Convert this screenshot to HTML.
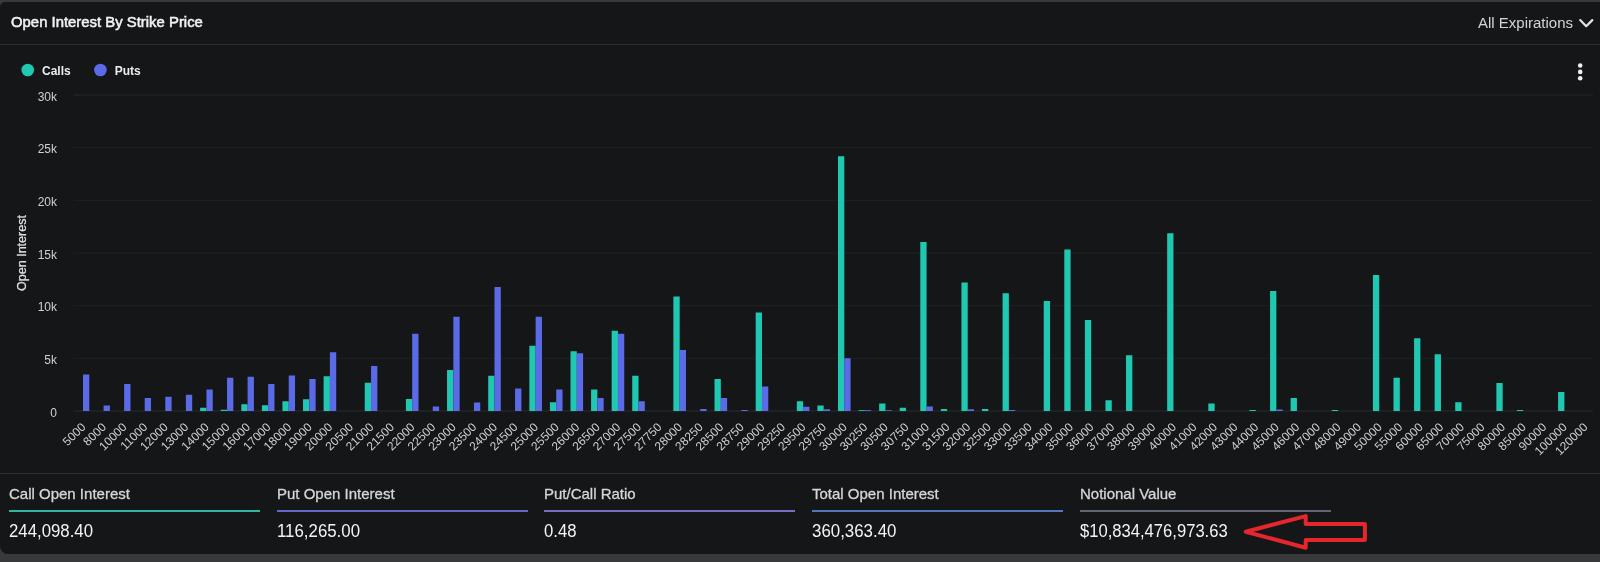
<!DOCTYPE html>
<html><head><meta charset="utf-8"><title>Open Interest By Strike Price</title>
<style>
html,body{margin:0;padding:0;}
body{width:1600px;height:562px;overflow:hidden;background:#38393b;font-family:"Liberation Sans",sans-serif;position:relative;}
#panel{position:absolute;left:0;top:2px;width:1610px;height:551.5px;background:#151618;border-radius:5px 0 0 8px;}
.abs{position:absolute;white-space:nowrap;will-change:transform;}
.sx{display:inline-block;transform-origin:0 50%;}
#title{left:11px;top:13px;font-size:15.5px;color:#f2f2f2;line-height:18px;-webkit-text-stroke:0.55px #f2f2f2;}
#exp{left:1478px;top:13.8px;font-size:15.2px;color:#d4d4d4;line-height:18px;}
.hline{position:absolute;left:0;width:1600px;height:1.5px;background:#2c2d30;}
svg{position:absolute;left:0;top:0;will-change:transform;}
.yl{font-size:12px;fill:#d0d0d0;font-family:"Liberation Sans",sans-serif;}
.xl{font-size:12px;fill:#cfcfcf;font-family:"Liberation Sans",sans-serif;}
.yt{font-size:12.5px;fill:#e0e0e0;stroke:#e0e0e0;stroke-width:0.25px;font-family:"Liberation Sans",sans-serif;}
.lg{font-size:12px;font-weight:bold;fill:#ececec;font-family:"Liberation Sans",sans-serif;}
.stat{position:absolute;top:474px;width:250.5px;height:80px;}
.stat .lab{position:absolute;left:0;top:485px;font-size:15px;color:#d6d6d6;line-height:18px;white-space:nowrap;}
.stat .ul{position:absolute;left:0;width:250.5px;height:2px;}
.stat .val{position:absolute;left:0;font-size:17px;color:#f4f4f4;line-height:20px;white-space:nowrap;}
</style></head><body>
<div id="panel"></div>
<div class="hline" style="top:43.8px"></div>
<div class="hline" style="top:472.5px"></div>
<div id="title" class="abs"><span class="sx" id="t_title" style="transform:scaleX(0.960)">Open Interest By Strike Price</span></div>
<div id="exp" class="abs"><span class="sx" id="t_exp" style="transform:scaleX(0.987)">All Expirations</span></div>
<svg width="1600" height="562" viewBox="0 0 1600 562">
<polyline points="1580.2,20.1 1586.2,26.2 1592.3,20.1" fill="none" stroke="#e4e4e4" stroke-width="2.2" stroke-linecap="round" stroke-linejoin="round"/>
<circle cx="1580.2" cy="65.5" r="2.3" fill="#f0f0f0"/><circle cx="1580.2" cy="71.9" r="2.3" fill="#f0f0f0"/><circle cx="1580.2" cy="78.3" r="2.3" fill="#f0f0f0"/>
<circle cx="27.75" cy="70" r="6.3" fill="#20c8b1"/><text x="42" y="74.5" class="lg">Calls</text>
<circle cx="100.4" cy="70" r="6.3" fill="#5b6be8"/><text x="114.7" y="74.5" class="lg">Puts</text>
<line x1="73.5" x2="1593" y1="95.00" y2="95.00" stroke="#252629" stroke-width="1"/>
<line x1="73.5" x2="1593" y1="147.67" y2="147.67" stroke="#202124" stroke-width="1"/>
<line x1="73.5" x2="1593" y1="200.33" y2="200.33" stroke="#202124" stroke-width="1"/>
<line x1="73.5" x2="1593" y1="253.00" y2="253.00" stroke="#202124" stroke-width="1"/>
<line x1="73.5" x2="1593" y1="305.67" y2="305.67" stroke="#202124" stroke-width="1"/>
<line x1="73.5" x2="1593" y1="358.33" y2="358.33" stroke="#202124" stroke-width="1"/>
<line x1="73.5" x2="1593" y1="411.00" y2="411.00" stroke="#2a2b2e" stroke-width="1"/>
<rect x="83.00" y="374.50" width="6.3" height="36.50" fill="#5b6be8"/>
<rect x="103.58" y="405.50" width="6.3" height="5.50" fill="#5b6be8"/>
<rect x="124.15" y="384.00" width="6.3" height="27.00" fill="#5b6be8"/>
<rect x="144.72" y="398.00" width="6.3" height="13.00" fill="#5b6be8"/>
<rect x="165.30" y="396.75" width="6.3" height="14.25" fill="#5b6be8"/>
<rect x="185.88" y="394.75" width="6.3" height="16.25" fill="#5b6be8"/>
<rect x="200.15" y="407.75" width="6.3" height="3.25" fill="#20c8b1"/>
<rect x="206.45" y="389.50" width="6.3" height="21.50" fill="#5b6be8"/>
<rect x="220.72" y="409.75" width="6.3" height="1.25" fill="#20c8b1"/>
<rect x="227.03" y="377.75" width="6.3" height="33.25" fill="#5b6be8"/>
<rect x="241.30" y="404.25" width="6.3" height="6.75" fill="#20c8b1"/>
<rect x="247.60" y="376.75" width="6.3" height="34.25" fill="#5b6be8"/>
<rect x="261.87" y="405.25" width="6.3" height="5.75" fill="#20c8b1"/>
<rect x="268.17" y="384.00" width="6.3" height="27.00" fill="#5b6be8"/>
<rect x="282.45" y="401.25" width="6.3" height="9.75" fill="#20c8b1"/>
<rect x="288.75" y="375.50" width="6.3" height="35.50" fill="#5b6be8"/>
<rect x="303.02" y="399.25" width="6.3" height="11.75" fill="#20c8b1"/>
<rect x="309.32" y="379.00" width="6.3" height="32.00" fill="#5b6be8"/>
<rect x="323.60" y="376.25" width="6.3" height="34.75" fill="#20c8b1"/>
<rect x="329.90" y="352.25" width="6.3" height="58.75" fill="#5b6be8"/>
<rect x="364.75" y="382.75" width="6.3" height="28.25" fill="#20c8b1"/>
<rect x="371.05" y="366.00" width="6.3" height="45.00" fill="#5b6be8"/>
<rect x="405.90" y="399.00" width="6.3" height="12.00" fill="#20c8b1"/>
<rect x="412.20" y="333.75" width="6.3" height="77.25" fill="#5b6be8"/>
<rect x="432.77" y="406.50" width="6.3" height="4.50" fill="#5b6be8"/>
<rect x="447.05" y="370.00" width="6.3" height="41.00" fill="#20c8b1"/>
<rect x="453.35" y="316.75" width="6.3" height="94.25" fill="#5b6be8"/>
<rect x="473.93" y="402.50" width="6.3" height="8.50" fill="#5b6be8"/>
<rect x="488.20" y="375.75" width="6.3" height="35.25" fill="#20c8b1"/>
<rect x="494.50" y="287.00" width="6.3" height="124.00" fill="#5b6be8"/>
<rect x="515.08" y="388.50" width="6.3" height="22.50" fill="#5b6be8"/>
<rect x="529.35" y="345.75" width="6.3" height="65.25" fill="#20c8b1"/>
<rect x="535.65" y="316.75" width="6.3" height="94.25" fill="#5b6be8"/>
<rect x="549.92" y="402.25" width="6.3" height="8.75" fill="#20c8b1"/>
<rect x="556.22" y="389.50" width="6.3" height="21.50" fill="#5b6be8"/>
<rect x="570.50" y="351.25" width="6.3" height="59.75" fill="#20c8b1"/>
<rect x="576.80" y="353.25" width="6.3" height="57.75" fill="#5b6be8"/>
<rect x="591.08" y="389.50" width="6.3" height="21.50" fill="#20c8b1"/>
<rect x="597.38" y="398.00" width="6.3" height="13.00" fill="#5b6be8"/>
<rect x="611.65" y="330.75" width="6.3" height="80.25" fill="#20c8b1"/>
<rect x="617.95" y="333.75" width="6.3" height="77.25" fill="#5b6be8"/>
<rect x="632.23" y="375.75" width="6.3" height="35.25" fill="#20c8b1"/>
<rect x="638.52" y="401.25" width="6.3" height="9.75" fill="#5b6be8"/>
<rect x="673.38" y="296.50" width="6.3" height="114.50" fill="#20c8b1"/>
<rect x="679.67" y="350.00" width="6.3" height="61.00" fill="#5b6be8"/>
<rect x="700.25" y="409.00" width="6.3" height="2.00" fill="#5b6be8"/>
<rect x="714.52" y="379.00" width="6.3" height="32.00" fill="#20c8b1"/>
<rect x="720.82" y="398.00" width="6.3" height="13.00" fill="#5b6be8"/>
<rect x="741.40" y="410.00" width="6.3" height="1.00" fill="#5b6be8"/>
<rect x="755.68" y="312.50" width="6.3" height="98.50" fill="#20c8b1"/>
<rect x="761.98" y="386.50" width="6.3" height="24.50" fill="#5b6be8"/>
<rect x="796.83" y="401.25" width="6.3" height="9.75" fill="#20c8b1"/>
<rect x="803.12" y="406.75" width="6.3" height="4.25" fill="#5b6be8"/>
<rect x="817.40" y="405.50" width="6.3" height="5.50" fill="#20c8b1"/>
<rect x="823.70" y="409.25" width="6.3" height="1.75" fill="#5b6be8"/>
<rect x="837.98" y="156.25" width="6.3" height="254.75" fill="#20c8b1"/>
<rect x="844.27" y="358.25" width="6.3" height="52.75" fill="#5b6be8"/>
<rect x="858.55" y="410.15" width="6.3" height="0.85" fill="#20c8b1"/>
<rect x="864.85" y="410.15" width="6.3" height="0.85" fill="#5b6be8"/>
<rect x="879.12" y="403.50" width="6.3" height="7.50" fill="#20c8b1"/>
<rect x="885.42" y="410.25" width="6.3" height="0.75" fill="#5b6be8"/>
<rect x="899.70" y="407.75" width="6.3" height="3.25" fill="#20c8b1"/>
<rect x="920.27" y="242.00" width="6.3" height="169.00" fill="#20c8b1"/>
<rect x="926.57" y="406.50" width="6.3" height="4.50" fill="#5b6be8"/>
<rect x="940.85" y="409.00" width="6.3" height="2.00" fill="#20c8b1"/>
<rect x="961.43" y="282.50" width="6.3" height="128.50" fill="#20c8b1"/>
<rect x="967.73" y="409.25" width="6.3" height="1.75" fill="#5b6be8"/>
<rect x="982.00" y="409.00" width="6.3" height="2.00" fill="#20c8b1"/>
<rect x="1002.58" y="293.25" width="6.3" height="117.75" fill="#20c8b1"/>
<rect x="1008.88" y="410.00" width="6.3" height="1.00" fill="#5b6be8"/>
<rect x="1043.73" y="301.00" width="6.3" height="110.00" fill="#20c8b1"/>
<rect x="1064.30" y="249.50" width="6.3" height="161.50" fill="#20c8b1"/>
<rect x="1084.88" y="320.00" width="6.3" height="91.00" fill="#20c8b1"/>
<rect x="1105.45" y="400.25" width="6.3" height="10.75" fill="#20c8b1"/>
<rect x="1126.03" y="355.25" width="6.3" height="55.75" fill="#20c8b1"/>
<rect x="1167.17" y="233.25" width="6.3" height="177.75" fill="#20c8b1"/>
<rect x="1208.33" y="403.50" width="6.3" height="7.50" fill="#20c8b1"/>
<rect x="1249.47" y="410.00" width="6.3" height="1.00" fill="#20c8b1"/>
<rect x="1270.05" y="291.00" width="6.3" height="120.00" fill="#20c8b1"/>
<rect x="1276.35" y="409.50" width="6.3" height="1.50" fill="#5b6be8"/>
<rect x="1290.62" y="398.00" width="6.3" height="13.00" fill="#20c8b1"/>
<rect x="1331.78" y="410.00" width="6.3" height="1.00" fill="#20c8b1"/>
<rect x="1372.92" y="275.00" width="6.3" height="136.00" fill="#20c8b1"/>
<rect x="1393.50" y="377.75" width="6.3" height="33.25" fill="#20c8b1"/>
<rect x="1414.08" y="338.25" width="6.3" height="72.75" fill="#20c8b1"/>
<rect x="1434.65" y="354.25" width="6.3" height="56.75" fill="#20c8b1"/>
<rect x="1455.22" y="402.25" width="6.3" height="8.75" fill="#20c8b1"/>
<rect x="1496.38" y="383.00" width="6.3" height="28.00" fill="#20c8b1"/>
<rect x="1516.95" y="410.00" width="6.3" height="1.00" fill="#20c8b1"/>
<rect x="1558.10" y="392.00" width="6.3" height="19.00" fill="#20c8b1"/>
<text x="57" y="100.60" text-anchor="end" class="yl">30k</text>
<text x="57" y="153.27" text-anchor="end" class="yl">25k</text>
<text x="57" y="205.93" text-anchor="end" class="yl">20k</text>
<text x="57" y="258.60" text-anchor="end" class="yl">15k</text>
<text x="57" y="311.27" text-anchor="end" class="yl">10k</text>
<text x="57" y="363.93" text-anchor="end" class="yl">5k</text>
<text x="57" y="416.60" text-anchor="end" class="yl">0</text>
<text x="86.40" y="427.7" text-anchor="end" class="xl" transform="rotate(-45 86.40 427.7)">5000</text>
<text x="106.98" y="427.7" text-anchor="end" class="xl" transform="rotate(-45 106.98 427.7)">8000</text>
<text x="127.55" y="427.7" text-anchor="end" class="xl" transform="rotate(-45 127.55 427.7)">10000</text>
<text x="148.12" y="427.7" text-anchor="end" class="xl" transform="rotate(-45 148.12 427.7)">11000</text>
<text x="168.70" y="427.7" text-anchor="end" class="xl" transform="rotate(-45 168.70 427.7)">12000</text>
<text x="189.28" y="427.7" text-anchor="end" class="xl" transform="rotate(-45 189.28 427.7)">13000</text>
<text x="209.85" y="427.7" text-anchor="end" class="xl" transform="rotate(-45 209.85 427.7)">14000</text>
<text x="230.43" y="427.7" text-anchor="end" class="xl" transform="rotate(-45 230.43 427.7)">15000</text>
<text x="251.00" y="427.7" text-anchor="end" class="xl" transform="rotate(-45 251.00 427.7)">16000</text>
<text x="271.57" y="427.7" text-anchor="end" class="xl" transform="rotate(-45 271.57 427.7)">17000</text>
<text x="292.15" y="427.7" text-anchor="end" class="xl" transform="rotate(-45 292.15 427.7)">18000</text>
<text x="312.72" y="427.7" text-anchor="end" class="xl" transform="rotate(-45 312.72 427.7)">19000</text>
<text x="333.30" y="427.7" text-anchor="end" class="xl" transform="rotate(-45 333.30 427.7)">20000</text>
<text x="353.87" y="427.7" text-anchor="end" class="xl" transform="rotate(-45 353.87 427.7)">20500</text>
<text x="374.45" y="427.7" text-anchor="end" class="xl" transform="rotate(-45 374.45 427.7)">21000</text>
<text x="395.02" y="427.7" text-anchor="end" class="xl" transform="rotate(-45 395.02 427.7)">21500</text>
<text x="415.60" y="427.7" text-anchor="end" class="xl" transform="rotate(-45 415.60 427.7)">22000</text>
<text x="436.17" y="427.7" text-anchor="end" class="xl" transform="rotate(-45 436.17 427.7)">22500</text>
<text x="456.75" y="427.7" text-anchor="end" class="xl" transform="rotate(-45 456.75 427.7)">23000</text>
<text x="477.32" y="427.7" text-anchor="end" class="xl" transform="rotate(-45 477.32 427.7)">23500</text>
<text x="497.90" y="427.7" text-anchor="end" class="xl" transform="rotate(-45 497.90 427.7)">24000</text>
<text x="518.48" y="427.7" text-anchor="end" class="xl" transform="rotate(-45 518.48 427.7)">24500</text>
<text x="539.05" y="427.7" text-anchor="end" class="xl" transform="rotate(-45 539.05 427.7)">25000</text>
<text x="559.62" y="427.7" text-anchor="end" class="xl" transform="rotate(-45 559.62 427.7)">25500</text>
<text x="580.20" y="427.7" text-anchor="end" class="xl" transform="rotate(-45 580.20 427.7)">26000</text>
<text x="600.77" y="427.7" text-anchor="end" class="xl" transform="rotate(-45 600.77 427.7)">26500</text>
<text x="621.35" y="427.7" text-anchor="end" class="xl" transform="rotate(-45 621.35 427.7)">27000</text>
<text x="641.92" y="427.7" text-anchor="end" class="xl" transform="rotate(-45 641.92 427.7)">27500</text>
<text x="662.50" y="427.7" text-anchor="end" class="xl" transform="rotate(-45 662.50 427.7)">27750</text>
<text x="683.07" y="427.7" text-anchor="end" class="xl" transform="rotate(-45 683.07 427.7)">28000</text>
<text x="703.65" y="427.7" text-anchor="end" class="xl" transform="rotate(-45 703.65 427.7)">28250</text>
<text x="724.22" y="427.7" text-anchor="end" class="xl" transform="rotate(-45 724.22 427.7)">28500</text>
<text x="744.80" y="427.7" text-anchor="end" class="xl" transform="rotate(-45 744.80 427.7)">28750</text>
<text x="765.38" y="427.7" text-anchor="end" class="xl" transform="rotate(-45 765.38 427.7)">29000</text>
<text x="785.95" y="427.7" text-anchor="end" class="xl" transform="rotate(-45 785.95 427.7)">29250</text>
<text x="806.52" y="427.7" text-anchor="end" class="xl" transform="rotate(-45 806.52 427.7)">29500</text>
<text x="827.10" y="427.7" text-anchor="end" class="xl" transform="rotate(-45 827.10 427.7)">29750</text>
<text x="847.67" y="427.7" text-anchor="end" class="xl" transform="rotate(-45 847.67 427.7)">30000</text>
<text x="868.25" y="427.7" text-anchor="end" class="xl" transform="rotate(-45 868.25 427.7)">30250</text>
<text x="888.82" y="427.7" text-anchor="end" class="xl" transform="rotate(-45 888.82 427.7)">30500</text>
<text x="909.40" y="427.7" text-anchor="end" class="xl" transform="rotate(-45 909.40 427.7)">30750</text>
<text x="929.97" y="427.7" text-anchor="end" class="xl" transform="rotate(-45 929.97 427.7)">31000</text>
<text x="950.55" y="427.7" text-anchor="end" class="xl" transform="rotate(-45 950.55 427.7)">31500</text>
<text x="971.12" y="427.7" text-anchor="end" class="xl" transform="rotate(-45 971.12 427.7)">32000</text>
<text x="991.70" y="427.7" text-anchor="end" class="xl" transform="rotate(-45 991.70 427.7)">32500</text>
<text x="1012.27" y="427.7" text-anchor="end" class="xl" transform="rotate(-45 1012.27 427.7)">33000</text>
<text x="1032.85" y="427.7" text-anchor="end" class="xl" transform="rotate(-45 1032.85 427.7)">33500</text>
<text x="1053.43" y="427.7" text-anchor="end" class="xl" transform="rotate(-45 1053.43 427.7)">34000</text>
<text x="1074.00" y="427.7" text-anchor="end" class="xl" transform="rotate(-45 1074.00 427.7)">35000</text>
<text x="1094.58" y="427.7" text-anchor="end" class="xl" transform="rotate(-45 1094.58 427.7)">36000</text>
<text x="1115.15" y="427.7" text-anchor="end" class="xl" transform="rotate(-45 1115.15 427.7)">37000</text>
<text x="1135.73" y="427.7" text-anchor="end" class="xl" transform="rotate(-45 1135.73 427.7)">38000</text>
<text x="1156.30" y="427.7" text-anchor="end" class="xl" transform="rotate(-45 1156.30 427.7)">39000</text>
<text x="1176.88" y="427.7" text-anchor="end" class="xl" transform="rotate(-45 1176.88 427.7)">40000</text>
<text x="1197.45" y="427.7" text-anchor="end" class="xl" transform="rotate(-45 1197.45 427.7)">41000</text>
<text x="1218.03" y="427.7" text-anchor="end" class="xl" transform="rotate(-45 1218.03 427.7)">42000</text>
<text x="1238.60" y="427.7" text-anchor="end" class="xl" transform="rotate(-45 1238.60 427.7)">43000</text>
<text x="1259.17" y="427.7" text-anchor="end" class="xl" transform="rotate(-45 1259.17 427.7)">44000</text>
<text x="1279.75" y="427.7" text-anchor="end" class="xl" transform="rotate(-45 1279.75 427.7)">45000</text>
<text x="1300.33" y="427.7" text-anchor="end" class="xl" transform="rotate(-45 1300.33 427.7)">46000</text>
<text x="1320.90" y="427.7" text-anchor="end" class="xl" transform="rotate(-45 1320.90 427.7)">47000</text>
<text x="1341.48" y="427.7" text-anchor="end" class="xl" transform="rotate(-45 1341.48 427.7)">48000</text>
<text x="1362.05" y="427.7" text-anchor="end" class="xl" transform="rotate(-45 1362.05 427.7)">49000</text>
<text x="1382.62" y="427.7" text-anchor="end" class="xl" transform="rotate(-45 1382.62 427.7)">50000</text>
<text x="1403.20" y="427.7" text-anchor="end" class="xl" transform="rotate(-45 1403.20 427.7)">55000</text>
<text x="1423.78" y="427.7" text-anchor="end" class="xl" transform="rotate(-45 1423.78 427.7)">60000</text>
<text x="1444.35" y="427.7" text-anchor="end" class="xl" transform="rotate(-45 1444.35 427.7)">65000</text>
<text x="1464.92" y="427.7" text-anchor="end" class="xl" transform="rotate(-45 1464.92 427.7)">70000</text>
<text x="1485.50" y="427.7" text-anchor="end" class="xl" transform="rotate(-45 1485.50 427.7)">75000</text>
<text x="1506.08" y="427.7" text-anchor="end" class="xl" transform="rotate(-45 1506.08 427.7)">80000</text>
<text x="1526.65" y="427.7" text-anchor="end" class="xl" transform="rotate(-45 1526.65 427.7)">85000</text>
<text x="1547.23" y="427.7" text-anchor="end" class="xl" transform="rotate(-45 1547.23 427.7)">90000</text>
<text x="1567.80" y="427.7" text-anchor="end" class="xl" transform="rotate(-45 1567.80 427.7)">100000</text>
<text x="1588.38" y="427.7" text-anchor="end" class="xl" transform="rotate(-45 1588.38 427.7)">120000</text>
<text x="26" y="253" text-anchor="middle" class="yt" transform="rotate(-90 26 253)">Open Interest</text>
<path d="M1245.7 531.7 L1305.7 516.1 L1305.7 524.1 L1364.9 524.1 L1364.9 540.1 L1305.7 540.1 L1305.7 547.7 Z" fill="none" stroke="#e6262d" stroke-width="4" stroke-linejoin="round"/>
</svg>
<div class="abs" style="left:8.75px;top:485px;font-size:15px;color:#d6d6d6;line-height:18px;-webkit-text-stroke:0.3px #d6d6d6;"><span class="sx" id="sl0">Call Open Interest</span></div>
<div class="abs" style="left:8.75px;top:510px;width:250.5px;height:1.6px;background:#2db7a0;"></div>
<div class="abs" style="left:8.75px;top:520.7px;font-size:17.5px;color:#f4f4f4;line-height:20px;"><span class="sx" id="sv0" style="transform:scaleX(0.959)">244,098.40</span></div>
<div class="abs" style="left:276.5px;top:485px;font-size:15px;color:#d6d6d6;line-height:18px;-webkit-text-stroke:0.3px #d6d6d6;"><span class="sx" id="sl1">Put Open Interest</span></div>
<div class="abs" style="left:276.5px;top:510px;width:250.5px;height:1.6px;background:#6468c8;"></div>
<div class="abs" style="left:276.5px;top:520.7px;font-size:17.5px;color:#f4f4f4;line-height:20px;"><span class="sx" id="sv1" style="transform:scaleX(0.962)">116,265.00</span></div>
<div class="abs" style="left:544.25px;top:485px;font-size:15px;color:#d6d6d6;line-height:18px;-webkit-text-stroke:0.3px #d6d6d6;"><span class="sx" id="sl2">Put/Call Ratio</span></div>
<div class="abs" style="left:544.25px;top:510px;width:250.5px;height:1.6px;background:#7b6cc0;"></div>
<div class="abs" style="left:544.25px;top:520.7px;font-size:17.5px;color:#f4f4f4;line-height:20px;"><span class="sx" id="sv2" style="transform:scaleX(0.954)">0.48</span></div>
<div class="abs" style="left:812.0px;top:485px;font-size:15px;color:#d6d6d6;line-height:18px;-webkit-text-stroke:0.3px #d6d6d6;"><span class="sx" id="sl3">Total Open Interest</span></div>
<div class="abs" style="left:812.0px;top:510px;width:250.5px;height:1.6px;background:#5277be;"></div>
<div class="abs" style="left:812.0px;top:520.7px;font-size:17.5px;color:#f4f4f4;line-height:20px;"><span class="sx" id="sv3" style="transform:scaleX(0.9636)">360,363.40</span></div>
<div class="abs" style="left:1079.75px;top:485px;font-size:15px;color:#d6d6d6;line-height:18px;-webkit-text-stroke:0.3px #d6d6d6;"><span class="sx" id="sl4">Notional Value</span></div>
<div class="abs" style="left:1079.75px;top:510px;width:250.5px;height:1.6px;background:#5f6671;"></div>
<div class="abs" style="left:1079.75px;top:520.7px;font-size:17.5px;color:#f4f4f4;line-height:20px;"><span class="sx" id="sv4" style="transform:scaleX(0.9485)">$10,834,476,973.63</span></div>
</body></html>
